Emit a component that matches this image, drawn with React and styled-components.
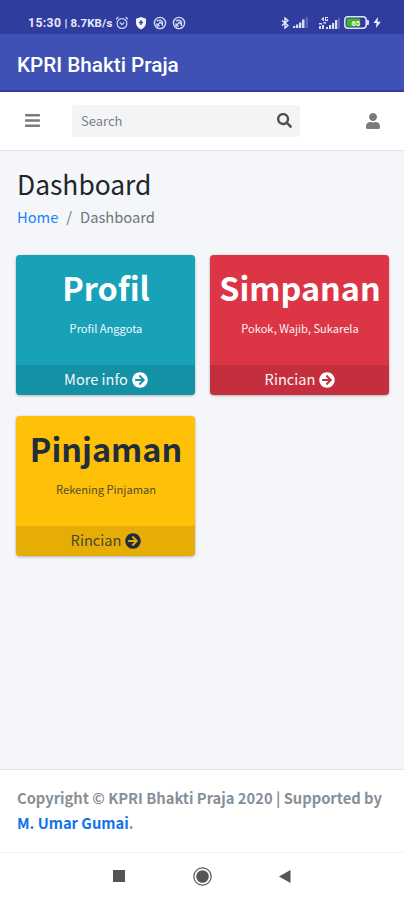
import React from "react";
import styled, { createGlobalStyle } from "styled-components";
import { FaArrowCircleRight, FaBars, FaSearch, FaUser } from "react-icons/fa";

const GlobalStyle = createGlobalStyle`
  * {
    box-sizing: border-box;
  }
  body {
    margin: 0;
    background: #f4f6f9;
    font-family: "Noto Sans CJK SC", "Noto Sans", sans-serif;
    color: #212529;
  }
`;

const Screen = styled.div`
  display: flex;
  flex-direction: column;
  width: 404px;
  height: 900px;
  overflow: hidden;
`;

const StatusBar = styled.div`
  display: flex;
  align-items: center;
  height: 34px;
  padding: 11px 23px 0 28px;
  background: #303d9f;
  color: #e8eafa;
  font-family: Roboto, sans-serif;
  font-weight: 700;
  white-space: pre;
`;

const Clock = styled.span`
  font-size: 12.2px;
  letter-spacing: 0.4px;
`;

const Speed = styled.span`
  font-size: 11.4px;
  letter-spacing: 0.15px;
`;

const StatusIcons = styled.div`
  display: flex;
  align-items: center;

  svg {
    display: block;
  }
`;

const LeftIcons = styled(StatusIcons)`
  gap: 5px;
  margin: 0 auto 0 3px;
`;

const RightIcons = styled(StatusIcons)`
  gap: 4px;

  svg:nth-child(2) {
    margin: 0 6px 0 0;
  }
`;

const TitleBar = styled.header`
  display: flex;
  align-items: center;
  height: 58px;
  padding: 5px 17px 0;
  border-bottom: 2px solid #303d9f;
  background: #3f51b5;
  color: #fff;
  font-family: Roboto, sans-serif;
  font-size: 20.7px;
  font-weight: 500;
`;

const Navbar = styled.nav`
  display: flex;
  align-items: center;
  height: 59px;
  padding: 0 23px 1px 24px;
  border-bottom: 1px solid #e3e6e9;
  background: #fff;
  color: #7b7b7b;
`;

const SearchBox = styled.div`
  display: flex;
  align-items: center;
  justify-content: space-between;
  width: 228px;
  height: 32px;
  margin: 0 auto 0 31px;
  padding: 0 8px 0 9px;
  border-radius: 3px;
  background: #f2f4f6;
  color: #4f4f4f;
`;

const Placeholder = styled.span`
  color: #7c8085;
  font-size: 13px;
  line-height: 18px;
`;

const Main = styled.main`
  flex: 1;
  padding: 16px 15px 0 17px;
`;

const PageTitle = styled.h1`
  margin: 0;
  font-size: 26.4px;
  font-weight: 400;
  line-height: 34px;
`;

const Breadcrumb = styled.div`
  display: flex;
  gap: 8px;
  margin-top: 4px;
  color: #6c757d;
  font-size: 14.7px;
  line-height: 24px;
`;

const HomeLink = styled.a`
  color: #1a83f5;
`;

const Cards = styled.div`
  display: grid;
  grid-template-columns: 179px 179px;
  gap: 21px 15px;
  margin: 26px 0 0 -1px;
`;

const Card = styled.section`
  display: flex;
  flex-direction: column;
  height: 140px;
  overflow: hidden;
  border-radius: 4px;
  background: ${(props) => props.$bg};
  box-shadow: 0 0 1px rgba(0, 0, 0, 0.2), 0 1px 3px rgba(0, 0, 0, 0.25);
  color: ${(props) => props.$color};
  text-align: center;
`;

const CardTitle = styled.h3`
  margin: 11px 0 0;
  padding-left: 1px;
  font-size: 32.4px;
  font-weight: 700;
  line-height: 42px;
  white-space: nowrap;
`;

const CardText = styled.p`
  margin: 10px 0 auto;
  padding-left: 1px;
  font-size: 11.1px;
  line-height: 20px;
  opacity: ${(props) => props.$fade};
`;

const CardFooter = styled.div`
  display: flex;
  align-items: center;
  justify-content: center;
  gap: 4px;
  height: 30px;
  padding-left: 1px;
  background: rgba(0, 0, 0, 0.1);
  font-size: 14.6px;
  line-height: 20px;
`;

const FooterLabel = styled.span`
  padding-bottom: 2px;
  opacity: ${(props) => props.$fade};
`;

const Footer = styled.footer`
  height: 84px;
  padding: 15px 16px 0 17px;
  border-top: 1px solid #e3e6e9;
  border-bottom: 1px solid #f3f3f3;
  background: #fff;
  color: #869099;
  font-size: 14.72px;
  font-weight: 700;
  line-height: 25px;
  white-space: nowrap;
`;

const AuthorLink = styled.a`
  color: #0f73ea;
`;

const SystemNav = styled.div`
  display: flex;
  align-items: center;
  justify-content: space-between;
  height: 47px;
  padding: 0 112px;
  background: #fff;
`;

const cards = [
  {
    title: "Profil",
    text: "Profil Anggota",
    action: "More info",
    bg: "#17a2b8",
    color: "#fff",
    fade: 0.95,
  },
  {
    title: "Simpanan",
    text: "Pokok, Wajib, Sukarela",
    action: "Rincian",
    bg: "#dc3545",
    color: "#fff",
    fade: 0.95,
  },
  {
    title: "Pinjaman",
    text: "Rekening Pinjaman",
    action: "Rincian",
    bg: "#ffc107",
    color: "#1f2d3d",
    fade: 0.8,
  },
];

const AlarmIcon = () => (
  <svg width="14" height="14" viewBox="0 0 14 14" fill="none" stroke="#cfd5f3">
    <circle cx="7" cy="7.5" r="4.9" strokeWidth="1.2" />
    <path d="M1 3.2 3.5 1M13 3.2 10.5 1M4.8 6.5 7 8.6 9.2 6.5" strokeWidth="1.2" />
  </svg>
);

const ShieldIcon = () => (
  <svg width="14" height="14" viewBox="0 0 14 14">
    <path d="M7 1 12 2.8V7c0 3-2 5-5 6.4C4 12 2 10 2 7V2.8z" fill="#f4f5ff" />
    <path d="M7 4v5M5 6.5h4" stroke="#303d9f" strokeWidth="1.3" />
  </svg>
);

const CircleIcon = () => (
  <svg width="14" height="14" viewBox="0 0 14 14" fill="none" stroke="#d8dcf5">
    <circle cx="7" cy="7" r="5.6" strokeWidth="1.4" />
    <path d="M4 5.2c2-1.8 5-1.2 5.5 1.3V10M4.2 9.5 7 6.6M4 7.2v2.6h2.8M6.5 5.5l3 3" strokeWidth="1.3" />
  </svg>
);

const BluetoothIcon = () => (
  <svg width="8" height="12" viewBox="0 0 8 12" fill="none" stroke="#e8eafa">
    <path d="M1 3.5 7 8.5 4 11V1l3 2.5-6 5" strokeWidth="1.4" />
  </svg>
);

const SignalIcon = () => (
  <svg width="15" height="11" viewBox="0 0 15 11" fill="#d8dcf5">
    <path d="M0 9h2.3v2H0zM3 7.5h2.3V11H3zM6 5.5h2.3V11H6zM9 2.5h2.5V11H9z" />
    <path d="M12.5 0H15v11h-2.5z" opacity="0.25" />
  </svg>
);

const DataSignalIcon = () => (
  <svg width="22" height="12" viewBox="0 0 22 12" fill="#d8dcf5">
    <path d="M4 1.2 6 0v4H4.8V2.8H3zM7 0h3v1H8v2h1V2h1v2H7zM1 6h3v1.5H1zM5.5 5H8v1.5H5.5z" />
    <path d="M1 9h2v3H1zM4 8h2v4H4zM8 10h2v2H8zM11 8h2.2v4H11zM14 6h2.2v6H14zM17 3h2.3v9H17z" />
    <path d="M20 1h2v11h-2z" opacity="0.25" />
  </svg>
);

const BatteryIcon = () => (
  <svg width="25" height="13" viewBox="0 0 25 13">
    <rect x="0.8" y="0.8" width="21.4" height="11.4" rx="3.2" fill="#303d9f" stroke="#e0e4f8" strokeWidth="1.5" />
    <path d="M23 4h1q1 0 1 1v3q0 1-1 1h-1z" fill="#e0e4f8" />
    <rect x="2.6" y="2.6" width="13.5" height="7.8" rx="1.2" fill="#43b61e" />
    <text x="11.7" y="9.5" fill="#fff" fontSize="7.5" fontWeight="700" textAnchor="middle">
      65
    </text>
  </svg>
);

const BoltIcon = () => (
  <svg width="8" height="11" viewBox="0 0 8 11">
    <path d="M5 0 0.5 6H3.6L3 11 7.8 4.8H4.5z" fill="#f4f5ff" />
  </svg>
);

const App = () => {
  return (
    <>
      <GlobalStyle />
      <Screen>
        <StatusBar>
          <Clock>15:30</Clock>
          <Speed> | 8.7KB/s</Speed>
          <LeftIcons>
            <AlarmIcon />
            <ShieldIcon />
            <CircleIcon />
            <CircleIcon />
          </LeftIcons>
          <RightIcons>
            <BluetoothIcon />
            <SignalIcon />
            <DataSignalIcon />
            <BatteryIcon />
            <BoltIcon />
          </RightIcons>
        </StatusBar>
        <TitleBar>KPRI Bhakti Praja</TitleBar>
        <Navbar>
          <FaBars size={17} />
          <SearchBox>
            <Placeholder>Search</Placeholder>
            <FaSearch size={15} />
          </SearchBox>
          <FaUser size={16} />
        </Navbar>
        <Main>
          <PageTitle>Dashboard</PageTitle>
          <Breadcrumb>
            <HomeLink>Home</HomeLink>
            <span>/</span>
            <span>Dashboard</span>
          </Breadcrumb>
          <Cards>
            {cards.map(({ title, text, action, bg, color, fade }) => (
              <Card key={title} $bg={bg} $color={color}>
                <CardTitle>{title}</CardTitle>
                <CardText $fade={fade}>{text}</CardText>
                <CardFooter>
                  <FooterLabel $fade={fade}>{action}</FooterLabel>
                  <FaArrowCircleRight size={16} />
                </CardFooter>
              </Card>
            ))}
          </Cards>
        </Main>
        <Footer>
          Copyright © KPRI Bhakti Praja 2020 | Supported by
          <br />
          <AuthorLink>M. Umar Gumai</AuthorLink>.
        </Footer>
        <SystemNav>
          <svg width="14" height="14" viewBox="0 0 14 14">
            <rect x="1" y="0" width="12" height="12" fill="#555" />
          </svg>
          <svg width="20" height="20" viewBox="0 0 20 20">
            <circle cx="10.5" cy="9.5" r="8.7" fill="none" stroke="#555" strokeWidth="1.2" />
            <circle cx="10.5" cy="9.5" r="6.3" fill="#555" />
          </svg>
          <svg width="14" height="14" viewBox="0 0 14 14">
            <path d="M1 6.5 12.5 0v13z" fill="#555" />
          </svg>
        </SystemNav>
      </Screen>
    </>
  );
};

export default App;
